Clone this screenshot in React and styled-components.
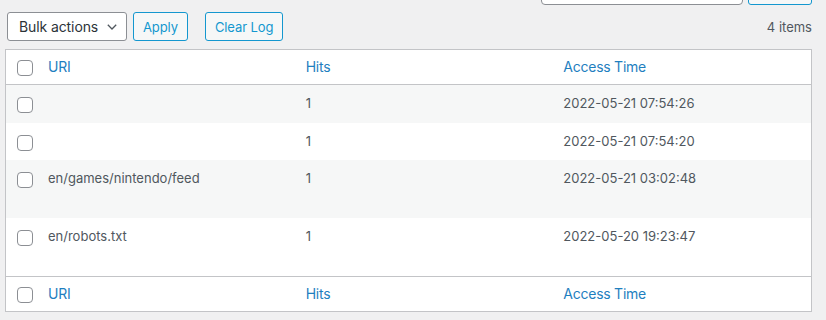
import React from "react";
import styled, { createGlobalStyle } from "styled-components";

const GlobalStyle = createGlobalStyle`
  html, body { margin: 0; padding: 0; }
  body {
    background: #f0f0f1;
    font-family: Inter, "Noto Sans", "Liberation Sans", sans-serif;
    color: #3c434a;
    overflow: hidden;
  }
  * { box-sizing: border-box; }
`;

const Page = styled.div`
  padding: 0 14px 0 5px;
`;

const SearchRow = styled.div`
  display: flex;
  justify-content: flex-end;
  gap: 5px;
  margin-top: -25px;
  height: 30px;
`;

const SearchInput = styled.div`
  width: 202px;
  height: 30px;
  background: #fff;
  border: 1px solid #8c8f94;
  border-radius: 4px;
`;

const SearchButton = styled.div`
  width: 64px;
  height: 30px;
  background: #f6f7f7;
  border: 1px solid #1497cf;
  border-radius: 3px;
`;

const TableNav = styled.div`
  display: flex;
  align-items: center;
  margin-top: 7px;
  padding-left: 2px;
  height: 29px;
`;

const Select = styled.div`
  display: flex;
  align-items: center;
  justify-content: space-between;
  width: 120px;
  height: 29px;
  padding: 0 9px 0 11px;
  background: #fff;
  border: 1px solid #8c8f94;
  border-radius: 3px;
  font-size: 14px;
  letter-spacing: -0.1px;
  color: #2c3338;
`;

const Button = styled.div`
  display: flex;
  align-items: center;
  height: 29px;
  padding: 0 9px;
  margin-left: ${(p) => p.$gap}px;
  background: #f6f7f7;
  border: 1px solid #1497cf;
  border-radius: 3px;
  color: #1497cf;
  font-size: 13px;
  letter-spacing: -0.1px;
`;

const Count = styled.div`
  margin-left: auto;
  font-size: 13px;
  color: #50575e;
`;

const Table = styled.table`
  width: 100%;
  margin-top: 8px;
  border-collapse: separate;
  border-spacing: 0;
  table-layout: fixed;
  background: #fff;
  border: 1px solid #c3c4c7;
`;

const HeadCell = styled.th`
  text-align: left;
  font-weight: 400;
  font-size: 14px;
  letter-spacing: -0.25px;
  line-height: 20px;
  padding: 7px 10px;
  vertical-align: top;
  border-bottom: ${(p) => (p.$foot ? "none" : "1px solid #c3c4c7")};
  border-top: ${(p) => (p.$foot ? "1px solid #c3c4c7" : "none")};
`;

const CheckHead = styled.td`
  width: 32px;
  padding: 10px 0 0 11px;
  vertical-align: top;
  border-bottom: ${(p) => (p.$foot ? "none" : "1px solid #c3c4c7")};
  border-top: ${(p) => (p.$foot ? "1px solid #c3c4c7" : "none")};
`;

const SortLink = styled.span`
  color: #1f7fbf;
`;

const Row = styled.tr`
  background: ${(p) => (p.$alt ? "#f6f7f7" : "#fff")};
`;

const CheckCell = styled.th`
  padding: 12px 0 0 11px;
  vertical-align: top;
  font-weight: 400;
`;

const Cell = styled.td`
  padding: 9px 10px;
  font-size: 13px;
  line-height: 19.5px;
  color: #50575e;
  vertical-align: top;
`;

const RowActions = styled.div`
  height: 20.5px;
`;

const Box = styled.span`
  display: block;
  width: 16px;
  height: 16px;
  background: #fff;
  border: 1px solid #8c8f94;
  border-radius: 4px;
`;

const rows = [
  { uri: "", hits: "1", time: "2022-05-21 07:54:26" },
  { uri: "", hits: "1", time: "2022-05-21 07:54:20" },
  { uri: "en/games/nintendo/feed", hits: "1", time: "2022-05-21 03:02:48" },
  { uri: "en/robots.txt", hits: "1", time: "2022-05-20 19:23:47" },
];

function HeaderRow({ foot }) {
  return (
    <tr>
      <CheckHead $foot={foot}>
        <Box />
      </CheckHead>
      <HeadCell $foot={foot}>
        <SortLink>URI</SortLink>
      </HeadCell>
      <HeadCell $foot={foot}>
        <SortLink>Hits</SortLink>
      </HeadCell>
      <HeadCell $foot={foot}>
        <SortLink>Access Time</SortLink>
      </HeadCell>
    </tr>
  );
}

export default function App() {
  return (
    <>
      <GlobalStyle />
      <Page>
        <SearchRow>
          <SearchInput />
          <SearchButton />
        </SearchRow>
        <TableNav>
          <Select>
            <span>Bulk actions</span>
            <svg width="10" height="6" viewBox="0 0 10 6" fill="none">
              <polyline points="0.8,0.8 5,5 9.2,0.8" stroke="#50575e" strokeWidth="1.3" />
            </svg>
          </Select>
          <Button $gap={6}>Apply</Button>
          <Button $gap={17}>Clear Log</Button>
          <Count>4 items</Count>
        </TableNav>
        <Table>
          <colgroup>
            <col style={{ width: 32 }} />
            <col />
            <col />
            <col />
          </colgroup>
          <thead>
            <HeaderRow />
          </thead>
          <tbody>
            {rows.map((r, i) => (
              <Row key={i} $alt={i % 2 === 0}>
                <CheckCell>
                  <Box />
                </CheckCell>
                <Cell>
                  {r.uri}
                  {r.uri && <RowActions />}
                </Cell>
                <Cell>{r.hits}</Cell>
                <Cell>{r.time}</Cell>
              </Row>
            ))}
          </tbody>
          <tfoot>
            <HeaderRow foot />
          </tfoot>
        </Table>
      </Page>
    </>
  );
}
